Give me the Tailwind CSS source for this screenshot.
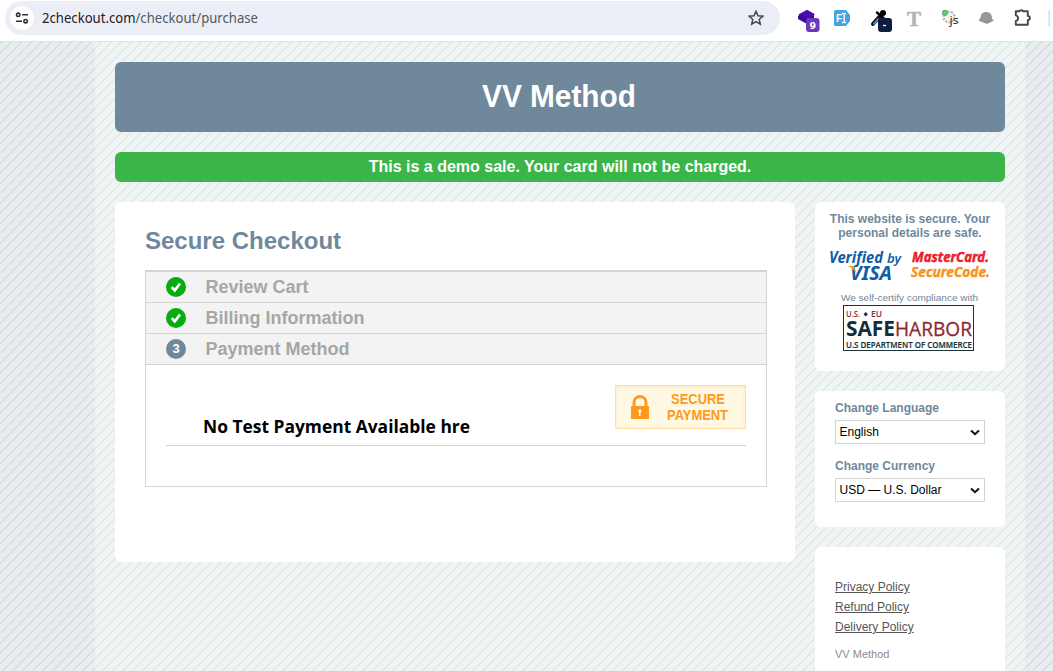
<!DOCTYPE html>
<html lang="en">
<head>
<meta charset="utf-8">
<title>Secure Checkout</title>
<script src="https://cdn.jsdelivr.net/npm/@tailwindcss/browser@4"></script>
</head>
<body class="w-[1053px] h-[671px] overflow-hidden bg-white font-['Liberation_Sans',sans-serif] text-[#708899]">
<header class="h-[42px] border-b border-[#dfe3e5] bg-white flex items-start">
  <div class="ml-[5px] mt-px w-[775px] h-[34px] rounded-full bg-[#ebeef7] flex items-center">
    <div class="ml-[5px] size-6 rounded-full bg-white flex items-center justify-center">
      <svg width="14" height="14" viewBox="0 0 14 14" fill="none" stroke="#303134" stroke-width="1.6"><circle cx="3.2" cy="3.8" r="1.7"/><path d="M7 3.8h6M1 10.2h6"/><circle cx="10.6" cy="10.2" r="1.7"/></svg>
    </div>
    <svg class="ml-2" width="230" height="24" viewBox="0 0 230 24" font-family="Noto Sans, sans-serif" font-size="13.5"><text x="0" y="17" textLength="216" lengthAdjust="spacingAndGlyphs" fill="#55585d"><tspan fill="#1f2023">2checkout.com</tspan>/checkout/purchase</text></svg>
    <svg class="ml-auto mr-4" width="16" height="16" viewBox="0 0 16 16" fill="none" stroke="#45474a" stroke-width="1.5"><path d="M8 1.3l2 4.4 4.9.5-3.7 3.2 1.1 4.8L8 11.7l-4.3 2.5 1.1-4.8L1.1 6.2 6 5.7z"/></svg>
  </div>
  <svg class="ml-[16px] shrink-0" width="257" height="38" viewBox="796 0 257 38">
    <path d="M807 9.7l8 4.5-8 4.7-8.6-4.4z" fill="#4a0db3"/><path d="M798 16l2-1.500 7 4 7-4v5l-7 4.500-9-5z" fill="#3b0a99"/>
    <rect x="806" y="18" width="13.5" height="14" rx="3" fill="#6b38bd"/><text x="809.6" y="28.5" font-family="DejaVu Sans" font-weight="bold" font-size="9.5" fill="#fff">9</text>
    <path d="M835.5 10H846l4 5v6l-4 5H835.5a1.5 1.5 0 0 1-1.5-1.500v-13A1.500 1.500 0 0 1 835.5 10z" fill="#44a3e0"/>
    <text x="836" y="22" font-family="Liberation Sans" font-weight="bold" font-size="10" fill="#fff">F</text><path d="M842 13.500h1.500l.7.7.7-.7h1.200M842 22.500h1.500l.7-.7.7.7h1.200M844.200 14v8" stroke="#fff" stroke-width="1.300" fill="none"/>
    <path d="M873 24l8-9" stroke="#111" stroke-width="4" stroke-linecap="round"/><path d="M873.500 24.500l5-6" stroke="#5b91e8" stroke-width="1.800"/><path d="M877 12.500l7 6" stroke="#000" stroke-width="2.500" stroke-linecap="round"/><circle cx="883" cy="13" r="3"/>
    <rect x="878" y="18" width="14" height="14" rx="3" fill="#0d1d42"/><path d="M883 25.500h3" stroke="#fff" stroke-width="1.300"/>
    <text x="907" y="25.500" font-family="Liberation Serif" font-weight="bold" font-size="22" textLength="14" lengthAdjust="spacingAndGlyphs" fill="#b5b5b5" stroke="#b5b5b5" stroke-width=".5">T</text>
    <circle cx="949" cy="17" r="5.500" fill="#f4f4f4" stroke="#bbb" stroke-width="2.200" stroke-dasharray="2.200 1.200"/><circle cx="945" cy="12.800" r="2.600" fill="#72ce75" stroke="#46aa4c"/>
    <text x="949.500" y="23.500" font-family="Noto Sans" font-size="11" fill="#292929" textLength="9" lengthAdjust="spacingAndGlyphs">js</text>
    <path d="M980.500 18c0-4 2.500-6 5.500-6 3.500 0 6 2 6 6v1c1.500 1 2 1.500 1 2l-6 3-7.500-3c-1-.7-.7-1.500 1-3z" fill="#989898"/><path d="M979 19.500c4 2.500 10 2.300 14.500.5" stroke="#888" fill="none" stroke-width=".6"/>
    <path d="M1015.800 11.300h3.700c.2-1.500 3.400-1.500 3.600 0h4.700v4.600c2.800.4 2.800 4 0 4.300v4.600h-12V21c3-.8 3-5 0-5.600z" fill="none" stroke="#45474a" stroke-width="1.900" stroke-linejoin="round"/>
    <rect x="1048.300" y="10" width="2" height="16" fill="#d3e3fd"/>
  </svg>
</header>
<div class="h-[629px] bg-[#e8edf0] bg-[linear-gradient(135deg,#d6dcdf_10%,transparent_12%,transparent_50%,#d6dcdf_52%,#d6dcdf_60%,transparent_62%)] bg-size-[10px_10px]">
 <main class="ml-[95px] w-[930px] h-full px-5 pt-5 bg-[#eff5f5] bg-[linear-gradient(135deg,#e1e8e7_10%,transparent_12%,transparent_50%,#e1e8e7_52%,#e1e8e7_60%,transparent_62%)] bg-size-[10px_10px] bg-position-[5px_0px]">
  <h1 class="h-[70px] rounded-md bg-[#70889c] text-white text-[30px] font-bold flex items-center justify-center">
    <svg width="156" height="40"><text x="0" y="30" fill="#fff" font-size="31" textLength="154" lengthAdjust="spacingAndGlyphs">VV Method</text></svg>
  </h1>
  <div class="mt-5 h-[30px] rounded-md bg-[#3bb54a] text-white text-base font-bold flex items-center justify-center">This is a demo sale. Your card will not be charged.</div>
  <div class="mt-5 flex items-start gap-5">
   <section class="w-[680px] h-[360px] rounded-md bg-white px-[30px] pt-[24px]">
    <h2 class="text-2xl leading-[30px] font-bold text-[#70889c]">Secure Checkout</h2>
    <div class="mt-[14px] w-[622px] h-[217px] border border-t-2 border-[#d5d5d5] text-[#a6a6a6] text-lg font-bold">
      <div class="h-[31px] bg-[#f3f3f3] border-b border-[#d5d5d5] flex items-center pl-5 gap-[19.5px]"><svg width="20" height="20"><circle cx="10" cy="10" r="10" fill="#09ab12"/><path d="M5.700 10.200l3 3.300 5.300-7" stroke="#fff" stroke-width="2.700" fill="none"/></svg>Review Cart</div>
      <div class="h-[31px] bg-[#f3f3f3] border-b border-[#d5d5d5] flex items-center pl-5 gap-[19.5px]"><svg width="20" height="20"><circle cx="10" cy="10" r="10" fill="#09ab12"/><path d="M5.700 10.200l3 3.300 5.300-7" stroke="#fff" stroke-width="2.700" fill="none"/></svg>Billing Information</div>
      <div class="h-[31px] bg-[#f3f3f3] border-b border-[#d5d5d5] flex items-center pl-5 gap-[19.5px]"><span class="size-5 rounded-full bg-[#70889c] text-white text-[13px] flex items-center justify-center">3</span>Payment Method</div>
      <div class="mx-5 h-[81px] border-b border-[#d5d5d5] flex items-start justify-between pt-5">
        <svg class="ml-[37px] mt-[26px]" width="280" height="32"><text x="0" y="22" font-family="Open Sans, sans-serif" font-weight="700" font-size="18.500" fill="#000" textLength="267" lengthAdjust="spacingAndGlyphs">No Test Payment Available hre</text></svg>
        <div class="w-[131px] h-[44px] border border-[#ffdca8] bg-[#fff8e3] shadow-[inset_0_1px_4px_#ffe8c0] flex items-center text-[#ff981b] text-sm leading-4">
          <svg class="ml-[14px]" width="20" height="26" viewBox="0 0 20 26"><path d="M4 13V8.500c0-8 12-8 12 0V13" fill="none" stroke="#ff981b" stroke-width="3"/><rect x="1" y="12" width="18" height="13" fill="#ff981b"/><circle cx="9.800" cy="17" r="1.700" fill="#fff8e3"/><path d="M9.800 17v5" stroke="#fff8e3" stroke-width="1.500"/></svg>
          <div class="flex-1 pl-4"><svg width="64" height="36" font-weight="bold" font-size="14" fill="#ff981b"><text x="5" y="15" textLength="54" lengthAdjust="spacingAndGlyphs">SECURE</text><text x="1" y="31" textLength="61" lengthAdjust="spacingAndGlyphs">PAYMENT</text></svg></div>
        </div>
      </div>
    </div>
   </section>
   <aside class="w-[190px] flex flex-col gap-5">
    <section class="h-[169px] rounded-md bg-white pt-[10px] flex flex-col items-center">
      <p class="text-xs leading-[14px] font-bold text-center text-[#70889c]">This website is secure. Your<br>personal details are safe.</p>
      <svg width="190" height="121" viewBox="815 240 190 121">
        <g font-family="Noto Sans" font-style="italic" font-weight="bold" fill="#125ca5"><text x="829" y="263" font-size="15.500" textLength="54" lengthAdjust="spacingAndGlyphs">Verified</text><text x="887" y="263" font-size="13" font-weight="600" textLength="14" lengthAdjust="spacingAndGlyphs">by</text><text x="850" y="280" font-size="19" textLength="42" lengthAdjust="spacingAndGlyphs">VISA</text></g><path d="M846.500 266h7l3.500 8c-2-4-6-7-10.500-8z" fill="#f7a21b"/>
        <g font-family="Noto Sans" font-style="italic" font-weight="bold" font-size="15" stroke-width=".5"><text x="912" y="262" fill="#ed1c2e" stroke="#ed1c2e" textLength="77" lengthAdjust="spacingAndGlyphs">MasterCard.</text><text x="911" y="277" fill="#f7941e" stroke="#f7941e" textLength="79" lengthAdjust="spacingAndGlyphs">SecureCode.</text></g>
        <text x="841" y="301" font-size="9.500" fill="#70889c" textLength="137" lengthAdjust="spacingAndGlyphs">We self-certify compliance with</text>
        <rect x="843.500" y="305.500" width="130" height="45" fill="#fff" stroke="#17343b"/>
        <g font-family="Open Sans" font-size="8.500" font-weight="600"><text x="846" y="317" fill="#8d2831" textLength="14" lengthAdjust="spacingAndGlyphs">U.S.</text><path d="M865.700 312l2.200 2.200-2.200 2.200-2.200-2.200z" fill="#17343b"/><text x="871" y="317" fill="#8d2831" textLength="11" lengthAdjust="spacingAndGlyphs">EU</text>
        <text x="846" y="336" font-size="20.500" font-weight="bold" fill="#102f38" textLength="49" lengthAdjust="spacingAndGlyphs">SAFE</text><text x="895" y="336" font-size="20.500" font-weight="400" fill="#8d2831" stroke="#8d2831" stroke-width=".3" textLength="77" lengthAdjust="spacingAndGlyphs">HARBOR</text><text x="846" y="348" font-size="9.500" fill="#17343b" stroke="#17343b" stroke-width=".2" textLength="126" lengthAdjust="spacingAndGlyphs">U.S DEPARTMENT OF COMMERCE</text></g>
      </svg>
    </section>
    <section class="h-[136px] rounded-md bg-white px-5 pt-[10px] text-xs">
      <div class="h-[19px] leading-[14px] font-bold text-[#70889c]">Change Language</div>
      <div class="h-6 border border-[#d3d3d3] text-black flex items-center justify-between pl-[3.5px] pr-1">English<svg width="10" height="7"><path d="M1 1.500l4 3.700 4-3.700" stroke="#111" stroke-width="2" fill="none"/></svg></div>
      <div class="mt-[15px] h-[19px] leading-[14px] font-bold text-[#70889c]">Change Currency</div>
      <div class="h-6 border border-[#d3d3d3] text-black flex items-center justify-between pl-[3.5px] pr-1">USD — U.S. Dollar<svg width="10" height="7"><path d="M1 1.500l4 3.700 4-3.700" stroke="#111" stroke-width="2" fill="none"/></svg></div>
    </section>
    <section class="h-[150px] rounded-md bg-white px-5 pt-[30px] text-xs leading-5 text-[#555]">
      <a class="block underline">Privacy Policy</a><a class="block underline">Refund Policy</a><a class="block underline">Delivery Policy</a>
      <p class="mt-[7px] text-[11px] text-[#8b8b8b]">VV Method</p>
    </section>
   </aside>
  </div>
 </main>
</div>
</body>
</html>
